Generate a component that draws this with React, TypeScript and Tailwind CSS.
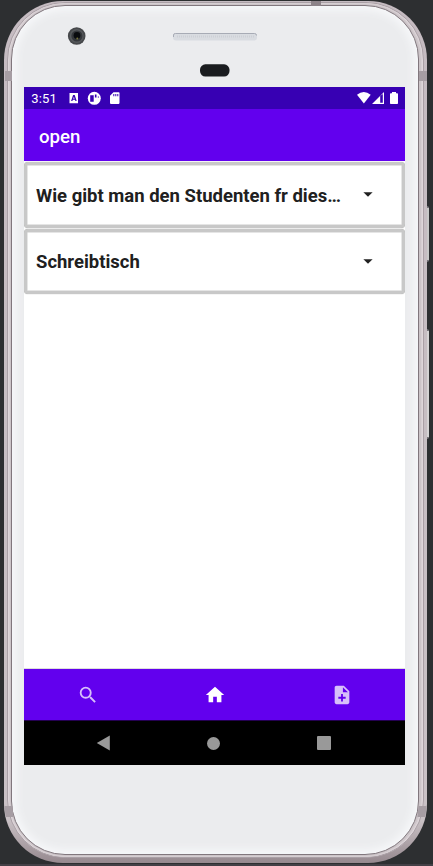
import React from "react";

const noteTitles = ["Wie gibt man den Studenten fr dies…", "Schreibtisch"];

function StatusBar() {
  return (
    <div className="flex h-[22px] shrink-0 items-center bg-[#3700b3] text-white">
      <svg width="381" height="22" viewBox="0 0 381 22" fill="currentColor">
        <text x="7.2" y="16.2" fontSize="13" textLength="25.5" fontWeight="400" fontFamily="Roboto, sans-serif">3:51</text>
        <path fillRule="evenodd" d="M45.5 6h8.5v10.3h-8.5zM49.1 8l-2 6h1.3l.4-1.2h2.2l.4 1.2h1.3l-2-6zm.8 1.8.7 1.9h-1.4z" />
        <circle cx="70.3" cy="11.3" r="6.5" />
        <path d="M66.2 8.2h3.5v6.6h-3.5zM70.9 7.4h1.6v3.2h-1.6zM73.9 8.8c.6.4.8 1 .9 1.6l-.9.6z" fill="#3700b3" />
        <path fillRule="evenodd" d="M89.5 5.3h5.2q.8 0 .8.8v10q0 .8-.8.8h-7.9q-.8 0-.8-.8V8.8zM89.3 6.9v2.3h1V6.9zm2 0v2.3h1V6.9zm2 0v2.3h1V6.9z" />
        <path d="M333 7.7q6.8-5.2 13.7 0l-6.8 8.8z" />
        <path fillRule="evenodd" d="M348 17 360 5v12zm8.2-8V15.8h2.6V7z" />
        <path d="M368 5h4v1.2h1.2q.8 0 .8.8v9.2q0 .8-.8.8h-6.4q-.8 0-.8-.8V7q0-.8.8-.8h1.2z" />
      </svg>
    </div>
  );
}

function NoteCard({ title }: { title: string }) {
  return (
    <div className="flex h-[65.5px] items-center justify-between rounded-[4px] border-[3px] border-[#c8c8c8] bg-white pr-[29px] pl-[8.5px] shadow-[0_0_1px_#999,inset_0_0_0_0.5px_#ccc]">
      <span className="whitespace-nowrap pt-[2px] font-bold text-[18.6px] leading-6 text-[#202020]">
        <span className="inline-block origin-left scale-x-[0.994]">{title}</span>
      </span>
      <svg width="10" height="5" viewBox="0 0 10 5"><path d="M.4.2h9.2L5 4.8z" fill="#202020" /></svg>
    </div>
  );
}

function BottomTabs() {
  return (
    <nav className="flex h-[51px] shrink-0 items-center justify-around bg-[#6200ee] text-white">
      <svg className="opacity-75" width="22" height="22" viewBox="0 0 24 24" fill="currentColor">
        <path d="M15.5 14h-.79l-.28-.27A6.47 6.47 0 0 0 16 9.5 6.5 6.5 0 1 0 9.5 16c1.61 0 3.09-.59 4.23-1.57l.27.28v.79l5 4.99L20.49 19zm-6 0A4.5 4.5 0 1 1 14 9.5 4.49 4.49 0 0 1 9.5 14z" />
      </svg>
      <svg width="22" height="22" viewBox="0 0 24 24" fill="currentColor"><path d="M10 20v-6h4v6h5v-8h3L12 3 2 12h3v8z" /></svg>
      <svg className="opacity-75" width="22" height="22" viewBox="0 0 24 24" fill="currentColor">
        <path d="M14 2H6c-1.1 0-2 .9-2 2v16c0 1.1.89 2 1.99 2H18c1.1 0 2-.9 2-2V8zm2 14h-3v3h-2v-3H8v-2h3v-3h2v3h3zm-3-7V3.5L18.5 9z" />
      </svg>
    </nav>
  );
}

function SystemNavigation() {
  return (
    <div className="flex h-[45px] shrink-0 items-center justify-between border-t border-[#240052] bg-black pr-[74px] pl-[72px]">
      <svg width="14" height="16" viewBox="0 0 14 16"><path d="M13.8.5v15L.8 8z" fill="#999" /></svg>
      <div className="size-[13px] rounded-full bg-[#999]" />
      <div className="size-[14px] rounded-[1px] bg-[#999]" />
    </div>
  );
}

function Screen() {
  return (
    <div className="flex h-[678px] w-[381px] shrink-0 flex-col overflow-hidden bg-white">
      <StatusBar />
      <header className="flex h-[52px] shrink-0 items-center bg-[#6200ee] px-[15px] pt-[4px] text-[18.7px] font-medium text-white">open</header>
      <main className="flex flex-1 flex-col gap-px border-b border-[#ddd] pt-px">
        {noteTitles.map((title) => <NoteCard key={title} title={title} />)}
      </main>
      <BottomTabs />
      <SystemNavigation />
    </div>
  );
}

function CameraAndSpeaker() {
  return (
    <svg className="shrink-0" width="405" height="81" viewBox="12 6 405 81">
      <circle cx="76.7" cy="36" r="8.8" fill="#46484b" />
      <circle cx="76.7" cy="36" r="7" fill="#56595c" />
      <circle cx="76.9" cy="36" r="5.6" fill="#34373b" />
      <circle cx="77" cy="35.5" r="3.4" fill="#090b0e" />
      <circle cx="77.3" cy="38.5" r="1" fill="#77743e" />
      <rect x="173" y="33" width="84" height="7.5" rx="3" fill="#d9dce1" />
      <path d="M173.5 37v-2q0-1.5 2-1.5h79q2 0 2 2" fill="none" stroke="#a7abb5" />
      <path d="M177 36.5h78" stroke="#cdd0d6" strokeWidth="2" strokeDasharray="1 1" />
      <rect x="200" y="64.3" width="29.5" height="12.2" rx="5.4" fill="#1a1c1f" />
    </svg>
  );
}

export default function App() {
  return (
    <div className="relative h-[866px] w-[433px] overflow-hidden bg-[#2d2f31] pt-px pl-1 font-['Roboto',sans-serif]">
      <div className="absolute top-[206px] left-[426px] h-[56px] w-[3px] rounded-r-[2px] border-y-2 border-[#77747a] bg-[#c8c8c8]" />
      <div className="absolute top-[329px] left-[426px] h-[110px] w-[3px] rounded-r-[2px] border-y-2 border-[#77747a] bg-[#d5d3d4]" />
      <div className="absolute top-[864px] left-0 h-[2px] w-[433px] bg-[#434046]" />
      <div className="relative h-[862px] w-[423px] rounded-[59px] bg-linear-to-b from-[#c5bbc1] via-[#c9c1c5] via-95% to-[#96898f] pt-px pl-[3px]">
        <div className="h-[856px] w-[417px] rounded-[58px] border border-[#aaa0a6] bg-[#ded6da] pl-px">
          <div className="h-[854px] w-[413px] rounded-[57px] border border-[#d6ced2] bg-[#ccc4c8] pt-px pl-px">
            <div className="relative h-[850px] w-[408px] rounded-[54px] border border-[#81777d] bg-[#ebecee] shadow-[inset_0_0_9px_4px_#f7f8fa]">
              <div className="flex h-[848px] flex-col items-start">
                <CameraAndSpeaker />
                <div className="pl-[12px]"><Screen /></div>
              </div>
            </div>
          </div>
        </div>
        <div className="absolute top-[70px] left-px h-[10px] w-[7px] bg-[#a69da3]" />
        <div className="absolute top-[70px] right-0 h-[10px] w-[8px] bg-[#a69da3]" />
        <div className="absolute top-0 left-[307px] h-[5px] w-[10px] bg-[#8c8288]" />
        <div className="absolute top-[805px] left-px h-[11px] w-[8px] skew-x-6 bg-[#a69da3]" />
        <div className="absolute top-[805px] right-px h-[11px] w-[8px] -skew-x-6 bg-[#a69da3]" />
      </div>
    </div>
  );
}
